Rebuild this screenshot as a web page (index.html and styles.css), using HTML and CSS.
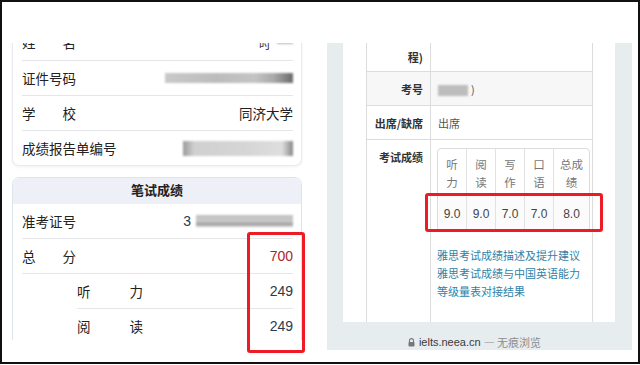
FILE: index.html
```html
<!DOCTYPE html>
<html lang="zh-CN">
<head>
    <meta charset="UTF-8">
    <meta name="viewport" content="width=device-width, initial-scale=1.0">
    <title>成绩对比</title>
    <link rel="stylesheet" href="styles.css">
</head>
<body>
    <div class="shot">
        <!-- 左边：笔试成绩 -->
        <div class="phone-a">
            <div class="card info">
                <div class="row first">
                    <span class="label spread"><i>姓</i><i>名</i></span>
                    <span class="val"><b class="dark-bit">吋</b><span class="blur blur-name"></span></span>
                </div>
                <div class="row">
                    <span class="label">证件号码</span>
                    <span class="val"><span class="blur blur-id"></span></span>
                </div>
                <div class="row">
                    <span class="label spread"><i>学</i><i>校</i></span>
                    <span class="val">同济大学</span>
                </div>
                <div class="row last">
                    <span class="label">成绩报告单编号</span>
                    <span class="val"><span class="blur blur-report"></span></span>
                </div>
            </div>

            <div class="card score">
                <div class="card-head">笔试成绩</div>
                <div class="row">
                    <span class="label">准考证号</span>
                    <span class="val"><span class="num">3</span><span class="blur blur-ticket"></span></span>
                </div>
                <div class="row">
                    <span class="label spread"><i>总</i><i>分</i></span>
                    <span class="val num total">700</span>
                </div>
                <div class="row sub">
                    <span class="label spread wide"><i>听</i><i>力</i></span>
                    <span class="val num">249</span>
                </div>
                <div class="row sub">
                    <span class="label spread wide"><i>阅</i><i>读</i></span>
                    <span class="val num">249</span>
                </div>
            </div>
        </div>

        <!-- 右边：雅思成绩 -->
        <div class="phone-b">
            <div class="page-wrap">
                <div class="page">
                    <table class="result">
                        <colgroup>
                            <col class="c-label">
                            <col>
                        </colgroup>
                        <tr class="first">
                            <th>程)</th>
                            <td></td>
                        </tr>
                        <tr class="stripe">
                            <th>考号</th>
                            <td><span class="blur blur-exam"></span>)</td>
                        </tr>
                        <tr>
                            <th>出席/缺席</th>
                            <td>出席</td>
                        </tr>
                        <tr class="scores">
                            <th>考试成绩</th>
                            <td>
                                <table class="band">
                                    <tr>
                                        <th>听<br>力</th>
                                        <th>阅<br>读</th>
                                        <th>写<br>作</th>
                                        <th>口<br>语</th>
                                        <th class="wide">总成<br>绩</th>
                                    </tr>
                                    <tr>
                                        <td>9.0</td>
                                        <td>9.0</td>
                                        <td>7.0</td>
                                        <td>7.0</td>
                                        <td>8.0</td>
                                    </tr>
                                </table>
                                <div class="links">
                                    <a>雅思考试成绩描述及提升建议</a>
                                    <a>雅思考试成绩与中国英语能力等级量表对接结果</a>
                                </div>
                            </td>
                        </tr>
                    </table>
                </div>
            </div>
            <div class="url-bar">
                <svg class="lock" width="7" height="9" viewBox="0 0 7 9">
                    <path d="M1.5 4V2.6a2 2 0 0 1 4 0V4" fill="none" stroke="#777" stroke-width="1.1"/>
                    <rect x="0.5" y="4" width="6" height="4.6" rx="0.8" fill="#777"/>
                </svg>
                <span class="host">ielts.neea.cn</span>
                <span class="mode">— 无痕浏览</span>
            </div>
        </div>

        <div class="mark mark-left"></div>
        <div class="mark mark-right"></div>
    </div>
</body>
</html>
```

FILE: styles.css
```css
body{
    margin: 0;
    padding: 0;
    background: #fff;
    font-family: "Liberation Sans", "Noto Sans CJK SC", sans-serif;
}
.shot{
    width: 640px;
    height: 364px;
    border: 2px solid #111;
    box-sizing: border-box;
    position: relative;
    display: flex;
    align-items: flex-start;
    padding-top: 41px;
    background: #fff;
    overflow: hidden;
}

/* 左边 */
.phone-a{
    margin-left: 8px;
    width: 295px;
    height: 297px;
    overflow: hidden;
    padding-left: 2px;
    box-sizing: border-box;
}
.card{
    width: 290px;
    box-sizing: border-box;
    background: #fff;
    padding: 0 8px 0 9px;
}
.info{
    margin-top: -17px;
    border: 1px solid #e7eaee;
    border-top: none;
    border-radius: 0 0 7px 7px;
    box-shadow: 0 1px 3px rgba(0,0,0,.06);
}
.score{
    margin-top: 11px;
    border: 1px solid #dfe4ea;
    border-radius: 7px 7px 0 0;
}
.card-head{
    margin: 0 -8px 0 -9px;
    height: 26px;
    line-height: 26px;
    background: #edf1f7;
    text-align: center;
    font-size: 13px;
    font-weight: bold;
    color: #222;
    border-radius: 7px 7px 0 0;
}
.row{
    display: flex;
    align-items: center;
    justify-content: space-between;
    height: 34px;
    border-bottom: 1px solid #e4e6ea;
    font-size: 13.5px;
    color: #222;
}
.row.first{
    align-items: flex-end;
    padding-bottom: 8px;
    box-sizing: border-box;
    height: 35px;
}
.row.last{
    border-bottom: none;
}
.row.sub{
    margin-left: 55px;
}
.label{
    font-family: "Noto Sans CJK SC", sans-serif;
}
.spread{
    display: flex;
    justify-content: space-between;
    width: 54px;
}
.spread.wide{
    width: 66px;
}
.spread i{
    font-style: normal;
}
.val{
    display: flex;
    align-items: center;
    font-family: "Noto Sans CJK SC", sans-serif;
}
.num{
    font-family: "Liberation Sans", sans-serif;
    font-size: 14px;
    color: #2c3a4c;
}
.total{
    color: #a9262c;
}
.dark-bit{
    font-weight: normal;
    font-size: 12px;
    color: #333;
    margin-right: 6px;
}

/* 打码 */
.blur{
    display: inline-block;
    filter: blur(1.2px);
}
.blur-name{
    width: 16px;
    height: 6px;
    margin-top: -6px;
    background: #bdbdbd;
}
.blur-id{
    width: 128px;
    height: 10px;
    background: linear-gradient(90deg, #c9c9c9 0, #bcbcbc 40%, #c4c4c4 70%, #a9a9a9 85%, #6b6b6b 100%);
}
.blur-report{
    width: 110px;
    height: 15px;
    background: linear-gradient(90deg, #9a9a9a 0, #d0d0d0 10%, #d6d6d6 60%, #dedede 90%, #888 100%);
}
.blur-ticket{
    width: 97px;
    height: 12px;
    margin-left: 5px;
    background: linear-gradient(180deg, #c2c2c2 0, #c9c9c9 55%, #9a9a9a 75%, #d8d8d8 100%);
}
.blur-exam{
    width: 30px;
    height: 11px;
    margin-right: 3px;
    vertical-align: middle;
    background: #bdbdbd;
}

/* 右边 */
.phone-b{
    margin-left: 22px;
    width: 305px;
    height: 307px;
    overflow: hidden;
    background: #e7ecef;
    display: flex;
    flex-direction: column;
}
.page-wrap{
    flex: 1;
    padding: 0 17px 0 16px;
    overflow: hidden;
}
.page{
    background: #fff;
    height: 100%;
    padding: 0 22px 0 23px;
    overflow: hidden;
}
.result{
    width: 227px;
    table-layout: fixed;
    border-collapse: collapse;
    font-family: "Noto Sans CJK SC", sans-serif;
    font-size: 11px;
    color: #555;
}
.c-label{
    width: 64px;
}
.result > tbody > tr > th,
.result > tbody > tr > td{
    border: 1px solid #dcdcdc;
    height: 33px;
    padding: 0 7px;
    line-height: 18px;
    white-space: nowrap;
}
.result > tbody > tr > th{
    text-align: right;
    color: #333;
    font-weight: bold;
}
.result > tbody > tr.first > th,
.result > tbody > tr.first > td{
    border-top: none;
    height: 23px;
    vertical-align: bottom;
    padding-bottom: 5px;
}
.result > tbody > tr.stripe > th,
.result > tbody > tr.stripe > td{
    background: #f7f7f7;
}
.result > tbody > tr.scores > th{
    vertical-align: top;
    padding-top: 8px;
    height: 200px;
}
.result > tbody > tr.scores > td{
    vertical-align: top;
    padding: 8px 6px 0 6px;
}
.band{
    width: 150px;
    table-layout: fixed;
    border: 1px solid #dcdcdc;
    border-radius: 4px;
    border-spacing: 0;
    font-family: "Noto Sans CJK SC", sans-serif;
}
.band th{
    width: 28px;
    font-weight: normal;
    color: #777;
    font-size: 11.5px;
    line-height: 18px;
    padding: 6px 0 4px;
    border-right: 1px solid #e2e2e2;
    border-bottom: 1px solid #e2e2e2;
}
.band th.wide{
    width: 35px;
}
.band td{
    height: 35px;
    padding: 0;
    text-align: center;
    font-family: "Liberation Sans", sans-serif;
    font-size: 12px;
    color: #444;
    border-right: 1px solid #e2e2e2;
    background: #fbfbfb;
}
.band th:last-child,
.band td:last-child{
    border-right: none;
}
.links{
    margin-top: 14px;
    font-size: 11px;
    line-height: 18px;
    white-space: normal;
}
.links a{
    display: block;
    color: #2f82a8;
}
.url-bar{
    height: 28px;
    padding-top: 12px;
    box-sizing: border-box;
    display: flex;
    align-items: center;
    justify-content: center;
    gap: 3px;
    font-size: 11px;
    margin-left: -10px;
}
.lock{
    margin-right: 1px;
}
.host{
    color: #3a3a3a;
}
.mode{
    color: #8c8c8c;
    font-family: "Noto Sans CJK SC", sans-serif;
}

/* 红框标注 */
.mark{
    position: absolute;
    border: 3px solid #ee1b24;
    border-radius: 3px;
    box-sizing: border-box;
}
.mark-left{
    left: 245px;
    top: 230px;
    width: 58px;
    height: 121px;
}
.mark-right{
    left: 423px;
    top: 191px;
    width: 178px;
    height: 39px;
}
```
